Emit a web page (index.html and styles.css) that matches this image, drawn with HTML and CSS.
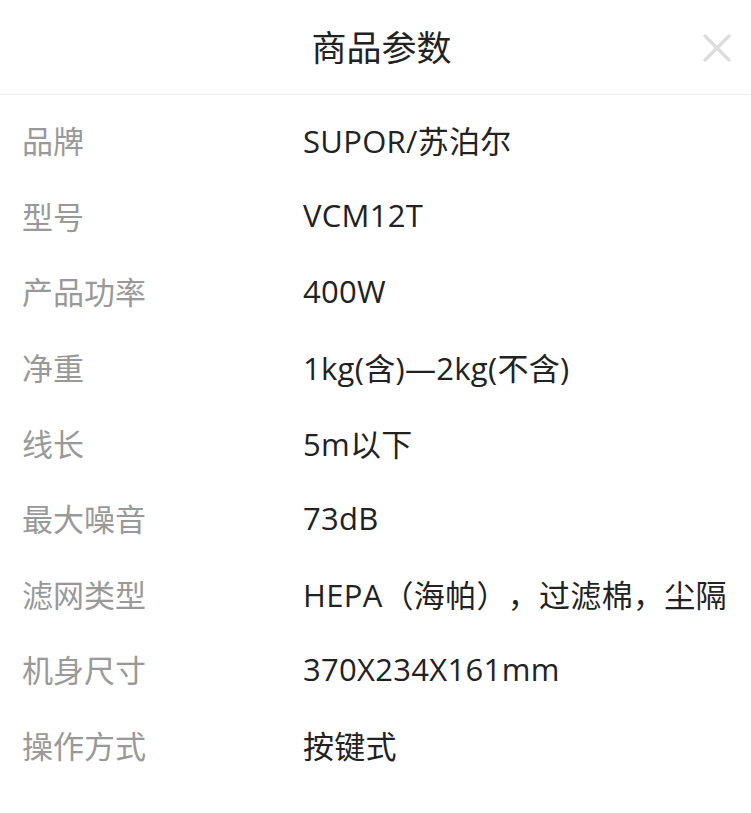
FILE: index.html
```html
<!DOCTYPE html>
<html>
<head>
    <meta name="viewport" content="width=device-width, initial-scale=1">
    <link rel="stylesheet" href="styles.css">
</head>

<body>
    <div id="param-panel">
        <div class="panel-header">
            <h1 class="panel-title">商品参数</h1>
            <button class="close-button" aria-label="关闭">
                <svg width="28" height="28" viewBox="0 0 28 28">
                    <path d="M2 2 L26 26 M26 2 L2 26" stroke="#dcdcdc" stroke-width="3.2" stroke-linecap="round" fill="none"/>
                </svg>
            </button>
        </div>

        <ul class="param-list">
            <li class="param-row"><span class="param-name">品牌</span><span class="param-value">SUPOR/苏泊尔</span></li>
            <li class="param-row"><span class="param-name">型号</span><span class="param-value">VCM12T</span></li>
            <li class="param-row"><span class="param-name">产品功率</span><span class="param-value">400W</span></li>
            <li class="param-row"><span class="param-name">净重</span><span class="param-value">1kg(含)—2kg(不含)</span></li>
            <li class="param-row"><span class="param-name">线长</span><span class="param-value">5m以下</span></li>
            <li class="param-row"><span class="param-name">最大噪音</span><span class="param-value">73dB</span></li>
            <li class="param-row"><span class="param-name">滤网类型</span><span class="param-value">HEPA（海帕），过滤棉，尘隔</span></li>
            <li class="param-row"><span class="param-name">机身尺寸</span><span class="param-value">370X234X161mm</span></li>
            <li class="param-row"><span class="param-name">操作方式</span><span class="param-value">按键式</span></li>
        </ul>
    </div>
</body>
</html>
```

FILE: styles.css
```css
* {
    box-sizing: border-box;
    font-family: 'Open Sans', 'Noto Sans CJK SC', sans-serif;
    text-spacing-trim: space-all; /* keep full-width punctuation at full width */
}

body {
    margin: 0;
    background: #fff;
    color: #222;
}

#param-panel {
    width: 751px;
    min-height: 813px;
    background: #fff;
}

.panel-header {
    height: 95px;
    display: flex;
    align-items: center;
    justify-content: center;
    border-bottom: 1px solid #eeeeee;
    position: relative; /* close button sits over the header */
    padding-left: 12px;
}

.panel-title {
    margin: 0;
    font-size: 35px;
    font-weight: normal;
    color: #222;
    line-height: 1;
}

.close-button {
    position: absolute;
    right: 20px;
    top: 34px;
    width: 28px;
    height: 28px;
    padding: 0;
    border: none;
    background: none;
    cursor: pointer;
}

.close-button svg {
    display: block;
}

.param-list {
    list-style: none;
    margin: 0;
    padding: 7px 0 0 22px;
}

.param-row {
    display: flex;
    align-items: center;
    height: 75.6px;
    font-size: 31px;
    white-space: nowrap;
    overflow: hidden;
}

.param-name {
    width: 281px;
    flex-shrink: 0;
    color: #999;
}

.param-value {
    color: #222;
    letter-spacing: 0.3px;
    overflow: hidden;
}
```
